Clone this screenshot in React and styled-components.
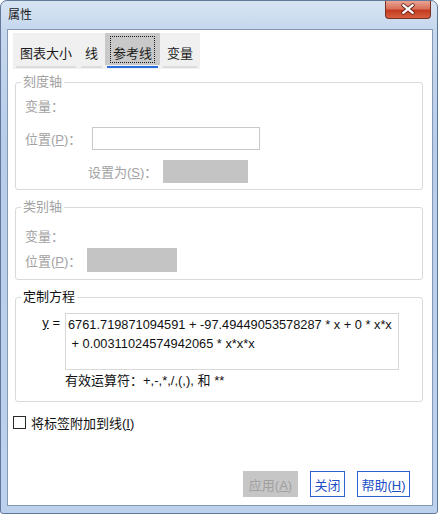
import React from 'react';
import styled, { createGlobalStyle } from 'styled-components';

const GlobalStyle = createGlobalStyle`
  html, body {
    margin: 0;
    padding: 0;
    background: #ffffff;
  }
  body {
    font-family: "Liberation Sans", "Noto Sans CJK SC", sans-serif;
    font-size: 13px;
    color: #1e1e1e;
  }
`;

const tabs = ['图表大小', '线', '参考线', '变量'];

const App = () => {
  return (
    <>
      <GlobalStyle />
      <Window>
        <TitleBar>
          <Title>属性</Title>
          <CloseButton aria-label="关闭">
            <svg width="46" height="17" viewBox="0 0 46 17">
              <path d="M18 4 L28 12 M28 4 L18 12" stroke="#5a1d14" strokeWidth="4" strokeLinecap="round" />
              <path d="M18 4 L28 12 M28 4 L18 12" stroke="#ffffff" strokeWidth="2.4" strokeLinecap="round" />
            </svg>
          </CloseButton>
        </TitleBar>

        <Client>
          <TabBar>
            {tabs.map((t) => (
              <Tab key={t}>
                <TabLabel $active={t === '参考线'}>{t}</TabLabel>
                <TabLine $active={t === '参考线'} />
              </Tab>
            ))}
          </TabBar>

          <GroupBox>
            <Legend $disabled>刻度轴</Legend>
            <Row $top={6}>
              <FieldLabel $disabled>变量：</FieldLabel>
            </Row>
            <Row $top={12}>
              <FieldLabel $disabled $w={67}>位置(<U>P</U>)：</FieldLabel>
              <TextBox $w={168} />
            </Row>
            <Row $top={10} $indent={63}>
              <FieldLabel $disabled $w={75}>设置为(<U>S</U>)：</FieldLabel>
              <GrayBox $w={85} $h={23} />
            </Row>
          </GroupBox>

          <GroupBox $bottom={7}>
            <Legend $disabled>类别轴</Legend>
            <Row $top={11}>
              <FieldLabel $disabled>变量：</FieldLabel>
            </Row>
            <Row $top={3}>
              <FieldLabel $disabled $w={62}>位置(<U>P</U>)：</FieldLabel>
              <GrayBox $w={90} $h={24} />
            </Row>
          </GroupBox>

          <GroupBox $bottom={11}>
            <Legend>定制方程</Legend>
            <EquationRow>
              <EqLabel><U>y</U> =</EqLabel>
              <EquationBox>
                {'6761.719871094591 + -97.49449053578287 * x + 0 * x*x\n + 0.00311024574942065 * x*x*x'}
              </EquationBox>
            </EquationRow>
            <Note>有效运算符：+,-,*,/,(,), 和 **</Note>
          </GroupBox>

          <CheckRow>
            <CheckBox />
            <span>将标签附加到线(<U>I</U>)</span>
          </CheckRow>

          <ButtonRow>
            <Button $w={55} disabled>应用(<U>A</U>)</Button>
            <Button $w={35}>关闭</Button>
            <Button $w={53}>帮助(<U>H</U>)</Button>
          </ButtonRow>
        </Client>
      </Window>
    </>
  );
};

// Styled Components
const Window = styled.div`
  width: 438px;
  height: 514px;
  box-sizing: border-box;
  display: flex;
  flex-direction: column;
  padding: 0 4px 7px 6px;
  border: 1px solid #62789a;
  border-radius: 7px 7px 3px 3px;
  background: linear-gradient(180deg, #d8e4f2 0px, #c6d8ee 28px, #b7cde9 140px, #bcd2ec 100%);
`;

const TitleBar = styled.div`
  height: 28px;
  display: flex;
  justify-content: space-between;
  align-items: flex-start;
`;

const Title = styled.div`
  padding: 6px 0 0 1px;
  font-size: 12px;
  line-height: 16px;
  color: #1a1a1a;
`;

const CloseButton = styled.div`
  width: 46px;
  height: 18px;
  margin-right: 2px;
  box-sizing: border-box;
  border: 1px solid #7b3024;
  border-top: none;
  border-radius: 0 0 4px 4px;
  background: linear-gradient(180deg, #e9a493 0%, #d9705a 45%, #c43b22 55%, #d5603e 100%);
  display: flex;
  align-items: center;
  justify-content: center;
`;

const Client = styled.div`
  flex: 1;
  display: flex;
  flex-direction: column;
  background: #ffffff;
  border: 1px solid #8598b4;
`;

const TabBar = styled.div`
  align-self: flex-start;
  display: flex;
  gap: 1px;
  margin: 3px 0 0 5px;
  padding: 0 1px 1px;
  background: #f0f0f0;
`;

const Tab = styled.div`
  display: flex;
  flex-direction: column;
`;

const TabLabel = styled.div`
  position: relative;
  height: 32px;
  box-sizing: border-box;
  padding: 9px ${({ $active }) => ($active ? '8px' : '6px')} 0;
  line-height: 24px;
  font-size: 13px;
  white-space: nowrap;
  color: #1a1a1a;
  background: ${({ $active }) => ($active ? '#c9c9c9' : 'transparent')};

  &::after {
    content: '';
    display: ${({ $active }) => ($active ? 'block' : 'none')};
    position: absolute;
    inset: 3px 5px 2px 5px;
    border: 1px dotted #1a1a1a;
  }
`;

const TabLine = styled.div`
  height: 2px;
  margin: 1px 2px 0;
  background: ${({ $active }) => ($active ? '#2b6ee0' : '#dcdcdc')};
`;

const GroupBox = styled.fieldset`
  margin: 6px 9px 0 7px;
  padding: 0 9px ${({ $bottom }) => $bottom ?? 6}px;
  min-width: 0;
  border: 1px solid #dadada;
  border-radius: 3px;
  display: flex;
  flex-direction: column;

  & + & {
    margin-top: 10px;
  }
`;

const Legend = styled.legend`
  margin-left: -4px;
  padding: 0 2px;
  font-size: 13px;
  line-height: 14px;
  color: ${({ $disabled }) => ($disabled ? '#a2a2a2' : '#111111')};
`;

const Row = styled.div`
  display: flex;
  align-items: center;
  min-height: 20px;
  margin-top: ${({ $top }) => $top}px;
  padding-left: ${({ $indent }) => $indent ?? 0}px;
`;

const FieldLabel = styled.span`
  width: ${({ $w }) => ($w ? `${$w}px` : 'auto')};
  flex-shrink: 0;
  white-space: nowrap;
  color: ${({ $disabled }) => ($disabled ? '#a2a2a2' : '#111111')};
`;

const U = styled.span`
  text-decoration: underline;
`;

const TextBox = styled.div`
  width: ${({ $w }) => $w}px;
  height: 23px;
  box-sizing: border-box;
  border: 1px solid #c9c9c9;
  background: #ffffff;
`;

const GrayBox = styled.div`
  width: ${({ $w }) => $w}px;
  height: ${({ $h }) => $h}px;
  background: #c4c4c4;
`;

const EquationRow = styled.div`
  display: flex;
  align-items: flex-start;
  margin-top: 9px;
`;

const EqLabel = styled.div`
  width: 40px;
  box-sizing: border-box;
  padding-right: 5px;
  text-align: right;
  line-height: 19px;
  font-size: 13px;
  color: #111111;
`;

const EquationBox = styled.div`
  width: 334px;
  height: 57px;
  box-sizing: border-box;
  padding: 1px 2px;
  border: 1px solid #d8d8d8;
  font-size: 12.8px;
  line-height: 19px;
  white-space: pre;
  color: #111111;
`;

const Note = styled.div`
  margin-top: 2px;
  padding-left: 40px;
  line-height: 18px;
  color: #111111;
`;

const CheckRow = styled.label`
  display: flex;
  align-items: center;
  gap: 5px;
  margin: 12px 0 0 5px;
  height: 16px;
  color: #111111;
`;

const CheckBox = styled.span`
  width: 13px;
  height: 13px;
  box-sizing: border-box;
  border: 1px solid #2a2a2a;
  background: #ffffff;
`;

const ButtonRow = styled.div`
  display: flex;
  justify-content: flex-end;
  align-items: center;
  gap: 12px;
  margin: auto 22px 8px 0;
`;

const Button = styled.button`
  width: ${({ $w }) => $w}px;
  height: 26px;
  padding: 0;
  box-sizing: border-box;
  font-family: inherit;
  font-size: 13px;
  white-space: nowrap;
  border: 1px solid ${({ disabled }) => (disabled ? '#c6c6c6' : '#2d5fd0')};
  background: ${({ disabled }) => (disabled ? '#c6c6c6' : '#ffffff')};
  color: ${({ disabled }) => (disabled ? '#a0a0a0' : '#2150c6')};
`;

export default App;
